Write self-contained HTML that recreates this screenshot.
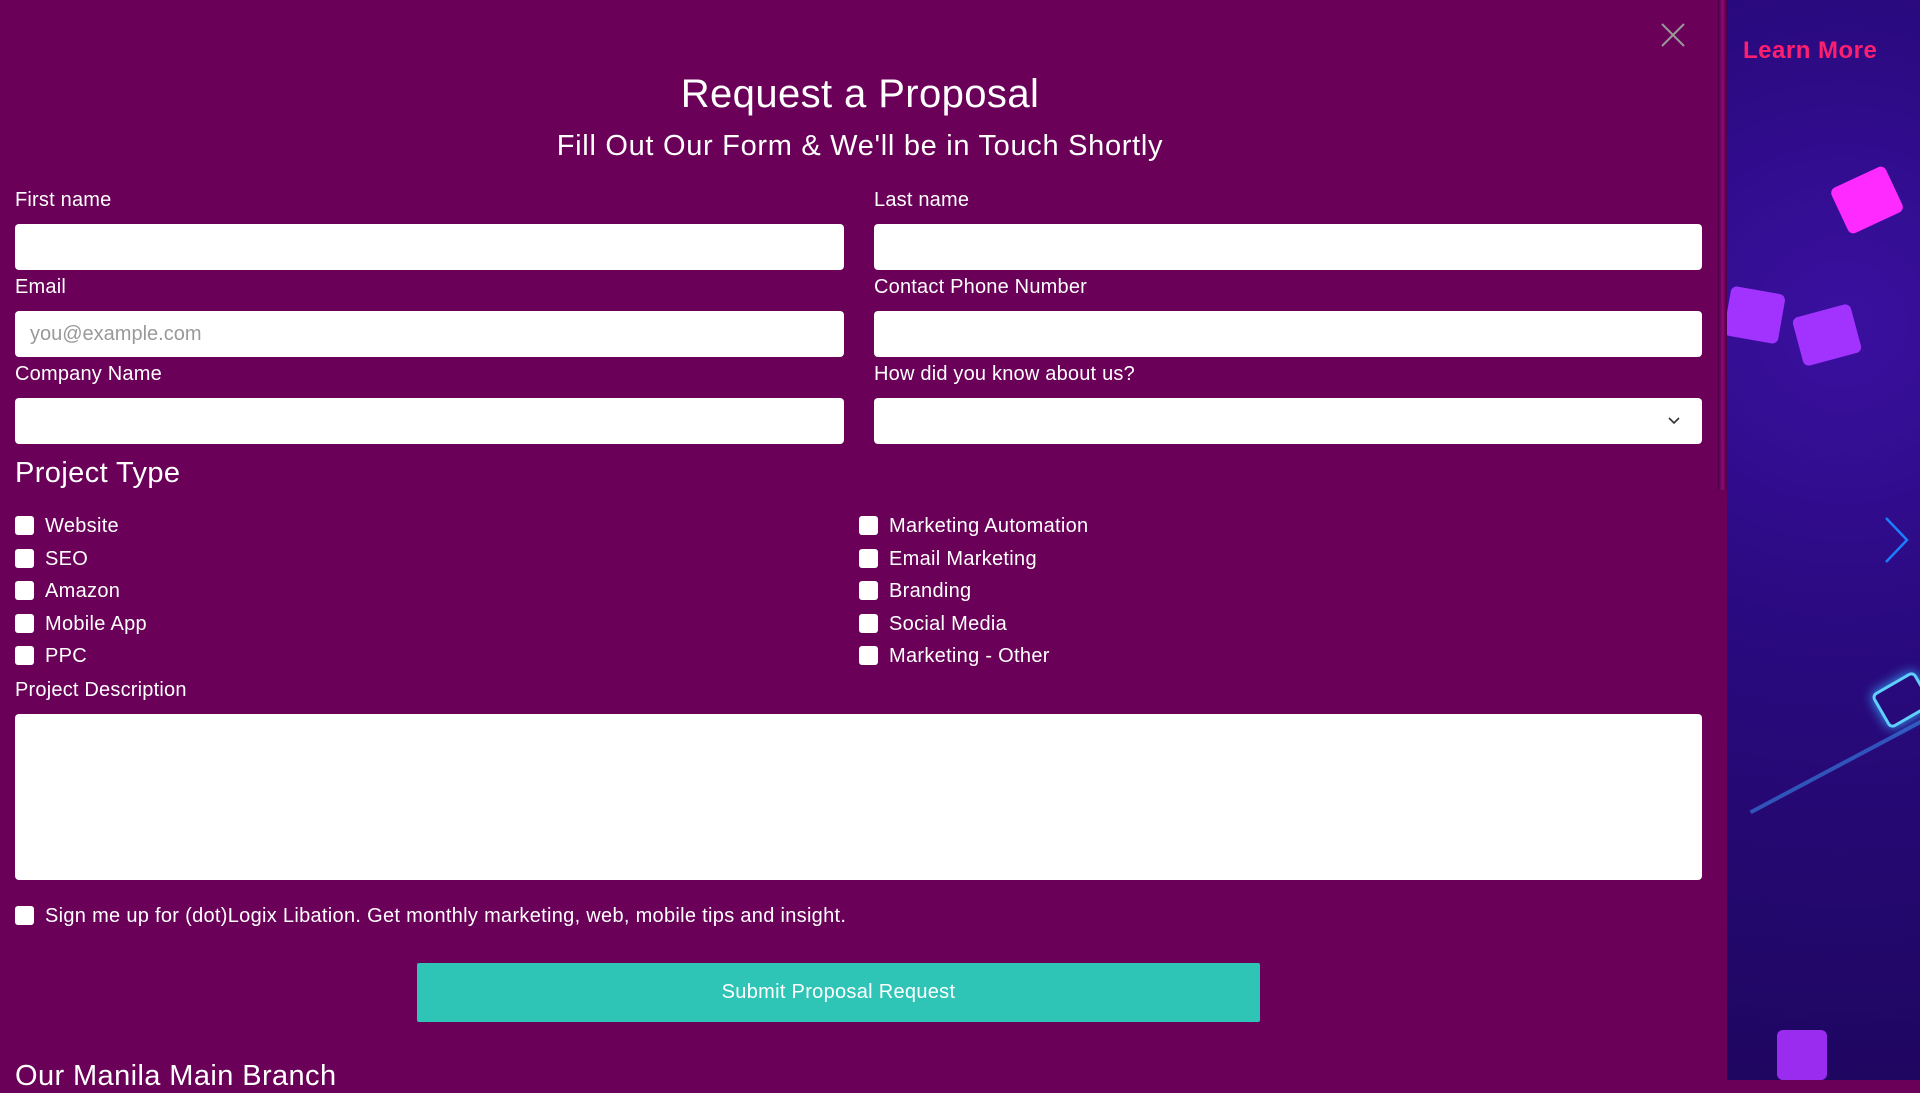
<!DOCTYPE html>
<html><head><meta charset="utf-8"><style>
*{box-sizing:border-box;margin:0;padding:0}
body{width:1920px;height:1080px;overflow:hidden;background:#6a0058;font-family:"Liberation Sans",sans-serif;color:#fff;position:relative}
.right{position:absolute;left:1727px;top:0;width:193px;height:1080px;background:radial-gradient(circle at 60% 30%,#3a10a0 0,#2a0a80 40%,#1f0660 100%);overflow:hidden}
.pz{position:absolute;background:#a233ff;border-radius:6px}
.sb{position:absolute;left:1718px;top:0;width:9px;height:490px;background:linear-gradient(90deg,#4a003e,#8a0a7a,#4a003e)}
.t{position:absolute;white-space:nowrap}
.in{position:absolute;background:#fff;border-radius:4px;height:46px}
.lab{font-size:20px;letter-spacing:0.2px}
.cb{position:absolute;width:19px;height:19px;background:#fff;border-radius:3px}
.ct{font-size:20px;letter-spacing:0.3px}
</style></head><body>
<div class="right">
 <div class="pz" style="left:110px;top:175px;width:60px;height:50px;background:#ff2aff;transform:rotate(-25deg)"></div>
 <div class="pz" style="left:0;top:290px;width:55px;height:50px;transform:rotate(10deg)"></div>
 <div class="pz" style="left:70px;top:310px;width:60px;height:50px;transform:rotate(-15deg)"></div>
 <div class="pz" style="left:50px;top:1030px;width:50px;height:50px;background:#9a2cf0"></div>
 <div style="position:absolute;left:150px;top:680px;width:50px;height:40px;border:3px solid #60d0ff;border-radius:6px;transform:rotate(-30deg);box-shadow:0 0 12px #3af"></div>
 <div style="position:absolute;left:0;top:720px;width:193px;height:4px;background:#3aa0ff;opacity:.5;transform:rotate(-28deg);transform-origin:100% 0"></div>
 <div class="t" style="left:16px;top:37px;font-size:24px;font-weight:bold;color:#ff1f6e;letter-spacing:0.5px">Learn More</div>
 <svg style="position:absolute;left:155px;top:515px" width="30" height="50"><path d="M4 3 L25 25 L4 47" stroke="#1a7fff" stroke-width="2.5" fill="none"/></svg>
</div>
<div class="sb"></div>
<svg style="position:absolute;left:1660px;top:22px" width="26" height="26"><path d="M2 2L24 24M24 2L2 24" stroke="#999" stroke-width="2"/></svg>
<div class="t" style="left:0;width:1720px;text-align:center;top:72px;font-size:40px;letter-spacing:0.4px">Request a Proposal</div>
<div class="t" style="left:0;width:1720px;text-align:center;top:130px;font-size:29px;letter-spacing:0.7px">Fill Out Our Form &amp; We'll be in Touch Shortly</div>

<div class="t lab" style="left:15px;top:189px">First name</div>
<div class="t lab" style="left:874px;top:189px">Last name</div>
<div class="in" style="left:15px;top:224px;width:829px"></div>
<div class="in" style="left:874px;top:224px;width:828px"></div>
<div class="t lab" style="left:15px;top:276px">Email</div>
<div class="t lab" style="left:874px;top:276px">Contact Phone Number</div>
<div class="in" style="left:15px;top:311px;width:829px;color:#999;font-size:20px;padding:12px 15px">you@example.com</div>
<div class="in" style="left:874px;top:311px;width:828px"></div>
<div class="t lab" style="left:15px;top:363px">Company Name</div>
<div class="t lab" style="left:874px;top:363px">How did you know about us?</div>
<div class="in" style="left:15px;top:398px;width:829px"></div>
<div class="in" style="left:874px;top:398px;width:828px"><svg style="position:absolute;right:22px;top:19px" width="12" height="8"><path d="M1 1L6 6L11 1" stroke="#333" stroke-width="1.6" fill="none"/></svg></div>
<div class="t" style="left:15px;top:457px;font-size:29px;letter-spacing:0.4px">Project Type</div>

<div class="cb" style="left:15px;top:516px"></div><div class="t ct" style="left:45px;top:515px">Website</div>
<div class="cb" style="left:15px;top:549px"></div><div class="t ct" style="left:45px;top:548px">SEO</div>
<div class="cb" style="left:15px;top:581px"></div><div class="t ct" style="left:45px;top:580px">Amazon</div>
<div class="cb" style="left:15px;top:614px"></div><div class="t ct" style="left:45px;top:613px">Mobile App</div>
<div class="cb" style="left:15px;top:646px"></div><div class="t ct" style="left:45px;top:645px">PPC</div>
<div class="cb" style="left:859px;top:516px"></div><div class="t ct" style="left:889px;top:515px">Marketing Automation</div>
<div class="cb" style="left:859px;top:549px"></div><div class="t ct" style="left:889px;top:548px">Email Marketing</div>
<div class="cb" style="left:859px;top:581px"></div><div class="t ct" style="left:889px;top:580px">Branding</div>
<div class="cb" style="left:859px;top:614px"></div><div class="t ct" style="left:889px;top:613px">Social Media</div>
<div class="cb" style="left:859px;top:646px"></div><div class="t ct" style="left:889px;top:645px">Marketing - Other</div>

<div class="t lab" style="left:15px;top:679px">Project Description</div>
<div class="in" style="left:15px;top:714px;width:1687px;height:166px"></div>
<div class="cb" style="left:15px;top:906px"></div><div class="t ct" style="left:45px;top:905px">Sign me up for (dot)Logix Libation. Get monthly marketing, web, mobile tips and insight.</div>
<div style="position:absolute;left:417px;top:963px;width:843px;height:59px;background:#2ec4b6;border-radius:2px;text-align:center;line-height:59px;font-size:20px;letter-spacing:0.3px">Submit Proposal Request</div>
<div class="t" style="left:15px;top:1060px;font-size:29px;letter-spacing:0.4px">Our Manila Main Branch</div>
</body></html>
